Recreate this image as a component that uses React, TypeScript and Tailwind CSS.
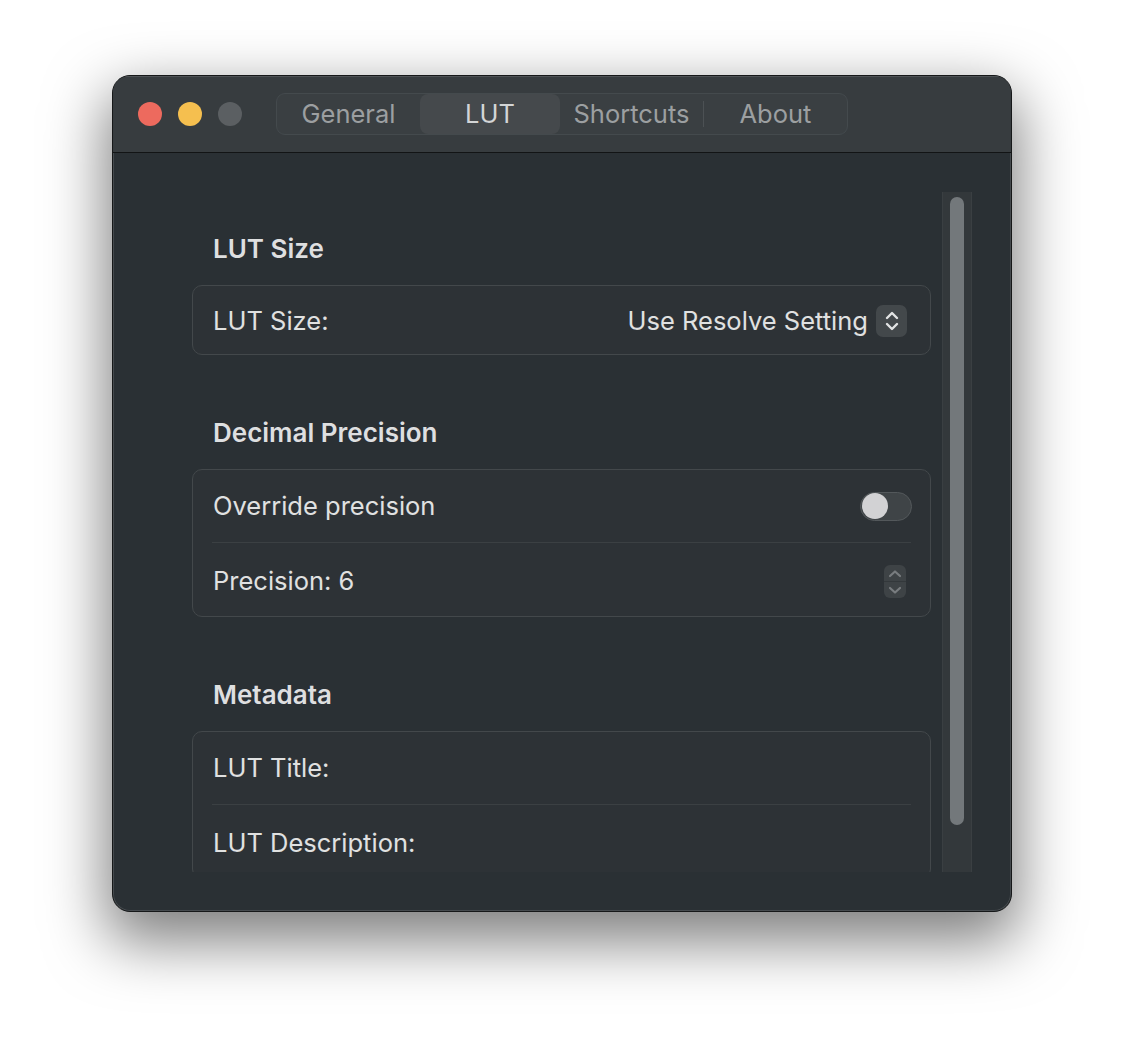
import React from "react"

const font = { fontFamily: "Inter, 'Noto Sans', sans-serif" }

function TrafficLights() {
    return (
        <div className="flex items-center gap-[16px]">
            <div className="w-[24px] h-[24px] rounded-full bg-[#ed6a5e]" />
            <div className="w-[24px] h-[24px] rounded-full bg-[#f5bf4f]" />
            <div className="w-[24px] h-[24px] rounded-full bg-[#5b5f62]" />
        </div>
    )
}

function Tabs() {
    const tabs = ["General", "LUT", "Shortcuts", "About"]
    const active = "LUT"
    return (
        <div className="flex items-center h-[42px] rounded-[9px] border border-[#444a4d] bg-[#3a3f42]">
            {tabs.map((tab, i) => (
                <React.Fragment key={tab}>
                    {i === 3 && <div className="w-px h-[26px] bg-[#4c5154]" />}
                    <div
                        className={
                            tab === active
                                ? "w-[140px] h-[40px] flex items-center justify-center rounded-[8px] bg-[#45494c] text-[#d3d5d6] text-[25.5px]"
                                : "w-[143px] h-[40px] flex items-center justify-center text-[#9c9fa1] text-[25.5px]"
                        }
                    >
                        {tab}
                    </div>
                </React.Fragment>
            ))}
        </div>
    )
}

function PopupChevrons() {
    return (
        <div className="w-[31px] h-[32px] rounded-[7px] bg-[#43484b] flex items-center justify-center">
            <svg width="16" height="22" viewBox="0 0 16 22" fill="none">
                <path d="M3 8 L8 3 L13 8" stroke="#e2e3e4" strokeWidth="2.4" strokeLinecap="round" strokeLinejoin="round" />
                <path d="M3 14 L8 19 L13 14" stroke="#e2e3e4" strokeWidth="2.4" strokeLinecap="round" strokeLinejoin="round" />
            </svg>
        </div>
    )
}

function Stepper() {
    return (
        <div className="w-[22px] h-[33px] rounded-[6px] bg-[#3e4346] flex flex-col overflow-hidden">
            <div className="flex-1 flex items-center justify-center border-b border-[#33383b]">
                <svg width="14" height="9" viewBox="0 0 14 9" fill="none">
                    <path d="M2 7 L7 2.5 L12 7" stroke="#787c7f" strokeWidth="2.2" strokeLinecap="round" strokeLinejoin="round" />
                </svg>
            </div>
            <div className="flex-1 flex items-center justify-center">
                <svg width="14" height="9" viewBox="0 0 14 9" fill="none">
                    <path d="M2 2 L7 6.5 L12 2" stroke="#787c7f" strokeWidth="2.2" strokeLinecap="round" strokeLinejoin="round" />
                </svg>
            </div>
        </div>
    )
}

function Toggle() {
    return (
        <div className="w-[52px] h-[29px] rounded-full bg-[#3f4447] border border-[#53585b] flex items-center px-px">
            <div className="w-[26px] h-[26px] rounded-full bg-[#d2d2d4]" />
        </div>
    )
}

function SectionHeader({ children }: { children: React.ReactNode }) {
    return <h2 className="h-[32px] flex items-center px-[21px] text-[26px] font-semibold text-[#dedfe0]">{children}</h2>
}

function Row({ label, right, height = "h-[72px]" }: { label: string; right?: React.ReactNode; height?: string }) {
    return (
        <div className={`${height} flex items-center justify-between px-[20px]`}>
            <span className="text-[25.5px] text-[#e0e1e1]">{label}</span>
            {right}
        </div>
    )
}

function Divider() {
    return <div className="mx-[19px] h-px bg-[#3b4043]" />
}

export default function App() {
    return (
        <div className="min-h-screen bg-white pt-[75px] pl-[112px]" style={font}>
            <div className="w-[900px] h-[837px] rounded-[18px] border border-[#161819] bg-[#2a3034] overflow-hidden flex flex-col shadow-[0_24px_60px_6px_rgba(0,0,0,0.5),inset_0_0_0_1px_rgba(255,255,255,0.13)]">
                {/* Title bar */}
                <div className="h-[77px] flex-shrink-0 flex items-center pl-[25px] bg-[#373c3f] border-b border-[#121415] shadow-[inset_0_1px_0_rgba(255,255,255,0.12)]">
                    <TrafficLights />
                    <div className="ml-[34px]">
                        <Tabs />
                    </div>
                </div>

                {/* Content */}
                <div className="flex-1 pt-[39px] pb-[39px] pl-[39px] pr-[39px]">
                    <div className="h-[680px] flex overflow-hidden">
                        <div className="flex-1 pl-[40px] pr-[11px] pt-[40px] flex flex-col">
                            <SectionHeader>LUT Size</SectionHeader>
                            <div className="mt-[21px] rounded-[10px] border border-[#43484b] bg-[#2d3236]">
                                <Row
                                    label="LUT Size:"
                                    height="h-[68px] pt-[2px]"
                                    right={
                                        <div className="flex items-center gap-[8px] mr-[3px]">
                                            <span className="text-[25.5px] text-[#e0e1e1]">Use Resolve Setting</span>
                                            <PopupChevrons />
                                        </div>
                                    }
                                />
                            </div>

                            <div className="mt-[61px]">
                                <SectionHeader>Decimal Precision</SectionHeader>
                            </div>
                            <div className="mt-[21px] rounded-[10px] border border-[#43484b] bg-[#2d3236]">
                                <Row label="Override precision" right={<div className="-mr-[2px]"><Toggle /></div>} />
                                <Divider />
                                <Row
                                    label="Precision: 6"
                                    height="h-[73px] pt-[4px]"
                                    right={
                                        <div className="mr-[4px]">
                                            <Stepper />
                                        </div>
                                    }
                                />
                            </div>

                            <div className="mt-[61px]">
                                <SectionHeader>Metadata</SectionHeader>
                            </div>
                            <div className="mt-[21px] rounded-[10px] border border-[#43484b] bg-[#2d3236] flex-shrink-0">
                                <Row label="LUT Title:" />
                                <Divider />
                                <Row label="LUT Description:" height="h-[73px] pt-[4px]" />
                            </div>
                        </div>

                        {/* Scrollbar */}
                        <div className="w-[30px] flex-shrink-0 bg-[#33383b] border-x border-[#3a3f42] pt-[5px] pb-[46px] flex justify-center">
                            <div className="w-[14px] h-[628px] rounded-full bg-[#73787b]" />
                        </div>
                    </div>
                </div>
            </div>
        </div>
    )
}
